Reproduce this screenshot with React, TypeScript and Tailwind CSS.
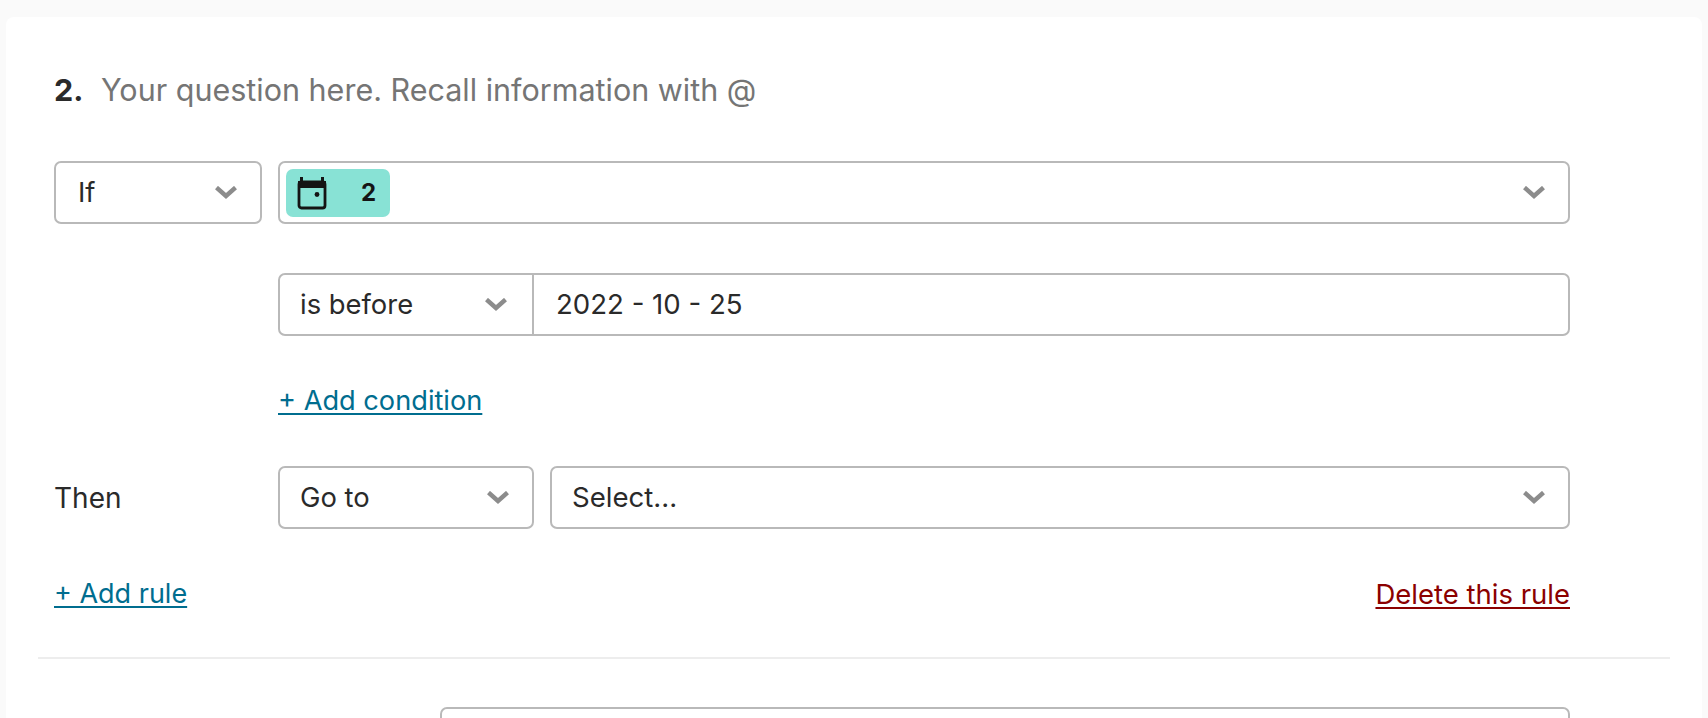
import React from "react";

function Chevron({ className = "" }: { className?: string }) {
  return (
    <svg className={className} width="24" height="14" viewBox="0 0 24 14" fill="none">
      <path d="M2.5 1.5 L12 10 L21.5 1.5" stroke="#8c8c8c" strokeWidth="4.4" />
    </svg>
  );
}

function CalendarIcon() {
  return (
    <svg width="30" height="34" viewBox="0 0 30 34" fill="none">
      <path d="M3 1 H6 V5 H24 V1 H27 V5 H29 V12 H1 V5 H3 Z" fill="#141414" />
      <rect x="2" y="6" width="26" height="26" rx="2.5" stroke="#141414" strokeWidth="2.8" />
      <circle cx="20" cy="18.5" r="2.4" fill="#141414" />
    </svg>
  );
}

const box = "flex h-[63px] items-center rounded-[7px] border-2 border-[#b9b9b9] bg-white";

export default function App() {
  return (
    <div className="h-[718px] overflow-hidden bg-[#fafafa] pl-[6px] pr-[6px] pt-[17px] font-['Inter',sans-serif] text-[27.4px] text-[#2a2a2a]">
      <div className="rounded-t-[8px] bg-white px-[32px] pb-4 pt-[42px]">
        <div className="flex h-[62px] items-center pl-[16px] text-[30.5px] leading-none">
          <span className="w-[47px] font-bold">2.</span>
          <span className="text-[#757575]">Your question here. Recall information with @</span>
        </div>

        <div className="mt-[40px] flex w-[1532px] pl-[16px] gap-[16px]">
          <div className={`${box} w-[208px] justify-between pl-[22px] pr-[22px]`}>
            <span>If</span>
            <Chevron />
          </div>
          <div className={`${box} flex-1 justify-between pl-[6px] pr-[22px]`}>
            <div className="flex h-[48px] w-[104px] items-center justify-between rounded-[7px] bg-[#88e2d5] pl-[11px] pr-[14px]">
              <CalendarIcon />
              <span className="text-[24px] font-bold text-[#141414]">2</span>
            </div>
            <Chevron />
          </div>
        </div>

        <div className="mt-[49px] ml-[240px] w-[1292px]">
          <div className={`${box} w-full`}>
            <div className="flex h-full w-[254px] items-center justify-between border-r-2 border-[#b9b9b9] pl-[20px] pr-[24px]">
              <span>is before</span>
              <Chevron />
            </div>
            <span className="pl-[22px] text-[27.6px]">2022 - 10 - 25</span>
          </div>
          <div className="mt-[46px] h-[36px] leading-[36px]">
            <a className="text-[27.2px] text-[#006d8f] underline decoration-2 underline-offset-[3px]">+ Add condition</a>
          </div>
        </div>

        <div className="mt-[48px] flex w-[1532px] items-center pl-[16px]">
          <span className="w-[224px] text-[28px]">Then</span>
          <div className="flex flex-1 gap-[16px]">
            <div className={`${box} w-[256px] justify-between pl-[20px] pr-[22px]`}>
              <span>Go to</span>
              <Chevron />
            </div>
            <div className={`${box} flex-1 justify-between pl-[20px] pr-[22px]`}>
              <span className="text-[27.6px]">Select...</span>
              <Chevron />
            </div>
          </div>
        </div>

        <div className="mt-[47px] flex w-[1532px] justify-between pl-[16px] leading-[36px]">
          <a className="text-[27px] text-[#006d8f] underline decoration-2 underline-offset-[3px]">+ Add rule</a>
          <a className="text-[27.5px] text-[#8b0000] underline decoration-2 underline-offset-[3px]">Delete this rule</a>
        </div>

        <div className="mt-[45px] h-[2px] w-[1632px] bg-[#ededed]" />

        <div className={`${box} mt-[48px] ml-[402px] w-[1130px]`} />
      </div>
    </div>
  );
}
